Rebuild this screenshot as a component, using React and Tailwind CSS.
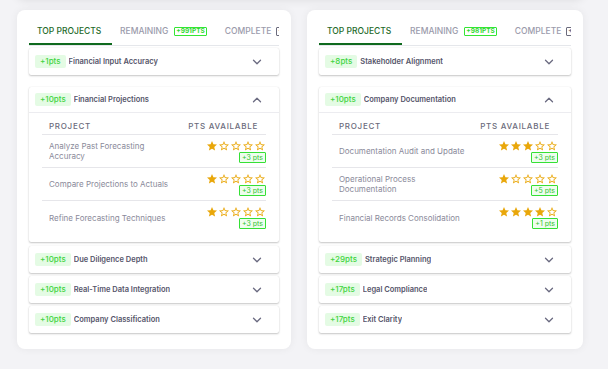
import React from 'react';
import { ChevronDown, ChevronUp } from 'lucide-react';

const STAR = "M12 17.27L18.18 21l-1.64-7.03L22 9.24l-7.19-.61L12 2 9.19 8.63 2 9.24l5.46 4.73L5.82 21z";
const STAR_BORDER = "M22 9.24l-7.19-.62L12 2 9.19 8.63 2 9.24l5.46 4.73L5.82 21 12 17.27 18.18 21l-1.63-7.03L22 9.24zM12 15.4l-3.76 2.27 1-4.28-3.32-2.88 4.38-.38L12 6.1l1.71 4.04 4.38.38-3.32 2.88 1 4.28L12 15.4z";

const boards = [
  {
    width: 'w-[274px]',
    remaining: '+991PTS',
    items: [
      { pts: '+1pts', title: 'Financial Input Accuracy' },
      {
        pts: '+10pts',
        title: 'Financial Projections',
        open: true,
        rows: [
          { name: 'Analyze Past Forecasting Accuracy', stars: 1, pts: '+3 pts' },
          { name: 'Compare Projections to Actuals', stars: 1, pts: '+3 pts' },
          { name: 'Refine Forecasting Techniques', stars: 1, pts: '+3 pts' },
        ],
      },
      { pts: '+10pts', title: 'Due Diligence Depth' },
      { pts: '+10pts', title: 'Real-Time Data Integration' },
      { pts: '+10pts', title: 'Company Classification' },
    ],
  },
  {
    width: 'w-[276px]',
    remaining: '+981PTS',
    items: [
      { pts: '+8pts', title: 'Stakeholder Alignment' },
      {
        pts: '+10pts',
        title: 'Company Documentation',
        open: true,
        rows: [
          { name: 'Documentation Audit and Update', stars: 3, pts: '+3 pts' },
          { name: 'Operational Process Documentation', stars: 1, pts: '+5 pts' },
          { name: 'Financial Records Consolidation', stars: 4, pts: '+1 pts' },
        ],
      },
      { pts: '+29pts', title: 'Strategic Planning' },
      { pts: '+17pts', title: 'Legal Compliance' },
      { pts: '+17pts', title: 'Exit Clarity' },
    ],
  },
];

const Stars = ({ count }) => (
  <div className="flex">
    {[0, 1, 2, 3, 4].map((i) => (
      <svg key={i} viewBox="0 0 24 24" className="w-[12px] h-[12px] fill-[#e9a70a]">
        <path d={i < count ? STAR : STAR_BORDER} />
      </svg>
    ))}
  </div>
);

const PtsChip = ({ children }) => (
  <span className="bg-[#e4fbe4] text-[#3fd43f] text-[8px] leading-[13px] h-[13px] px-[5px] rounded-[2px] font-medium shrink-0">
    {children}
  </span>
);

const Header = ({ item }) => (
  <div className={`flex items-center pl-[6px] pr-[15px] ${item.open ? 'h-[26px] border-b border-[#ececf0]' : 'h-[27px]'}`}>
    <PtsChip>{item.pts}</PtsChip>
    <span className="ml-[3px] text-[7.5px] font-semibold text-[#55556a] truncate">{item.title}</span>
    <span className="ml-auto text-[#6a6a80]">
      {item.open ? <ChevronUp size={14} strokeWidth={2.2} /> : <ChevronDown size={14} strokeWidth={2.2} />}
    </span>
  </div>
);

const Item = ({ item }) => (
  <div className={`bg-white rounded-[2px] shadow-[0_1px_2px_rgba(0,0,0,0.22),0_0_1px_rgba(0,0,0,0.12)] ${item.open ? 'mt-[9px] mb-[1px]' : ''}`}>
    <Header item={item} />
    {item.open && (
      <div className="px-[13px] pb-[8px]">
        <div className="flex items-center pt-[8px] pb-[3px] border-b border-[#e6e6ea] text-[8px] leading-[10px] font-medium tracking-[0.09em] text-[#6b6b7c] uppercase">
          <span className="pl-[7px]">Project</span>
          <span className="ml-auto pr-[8px]">Pts Available</span>
        </div>
        {item.rows.map((row, i) => (
          <div key={row.name} className={`flex items-center h-[33px] ${i < item.rows.length - 1 ? 'border-b border-[#e6e6ea]' : ''}`}>
            <span className="w-[142px] px-[7px] text-[8px] leading-[10px] text-[#8a8a9a]">{row.name}</span>
            <div className="ml-auto flex flex-col items-end">
              <Stars count={row.stars} />
              <span className="border border-[#35e035] bg-[#eefdee] text-[#2fc42f] text-[7px] leading-[9px] px-[2px] rounded-[1px]">
                {row.pts}
              </span>
            </div>
          </div>
        ))}
      </div>
    )}
  </div>
);

const Board = ({ board }) => (
  <div className={`${board.width} bg-white rounded-[8px] shadow-[0_0_8px_rgba(0,0,0,0.06)] px-[12px] pt-[10px] pb-[16px]`}>
    <div className="flex border-b border-[#e5e7eb] overflow-hidden whitespace-nowrap text-[8.5px] leading-[10px] font-medium uppercase">
      <div className="shrink-0 px-[8px] pt-[6px] pb-[7px] w-[83px] border-b-2 border-[#0f6a1e] text-[#1f6b2a]">Top Projects</div>
      <div className="shrink-0 flex items-center gap-[6px] pl-[8px] pr-[10px] pt-[6px] pb-[9px] text-[#9b9bab]">
        Remaining
        <span className="border border-[#33e633] text-[#2fd82f] text-[6.5px] leading-[7px] font-bold px-[1px] rounded-[1px]">{board.remaining}</span>
      </div>
      <div className="shrink-0 flex items-center gap-[5px] pl-[8px] pt-[6px] pb-[9px] text-[#9b9bab]">
        Complete
        <span className="border border-[#6b6b7c] text-[#6b6b7c] text-[6.5px] leading-[7px] font-bold px-[1px] rounded-[1px]">+0PTS</span>
      </div>
    </div>
    <div className="mt-[2px] flex flex-col gap-[3px]">
      {board.items.map((item) => (
        <Item key={item.title} item={item} />
      ))}
    </div>
  </div>
);

export default function App() {
  return (
    <div className="min-h-screen bg-[#f3f3f6] pt-[10px] pl-[17px] font-['Inter',sans-serif] overflow-hidden">
      <div className="-mt-[50px] mb-[10px] h-[40px] w-[566px] rounded-[8px] bg-white shadow-[0_0_10px_rgba(0,0,0,0.1)]" />
      <div className="flex items-start gap-[16px]">
        {boards.map((b) => (
          <Board key={b.remaining} board={b} />
        ))}
      </div>
    </div>
  );
}
